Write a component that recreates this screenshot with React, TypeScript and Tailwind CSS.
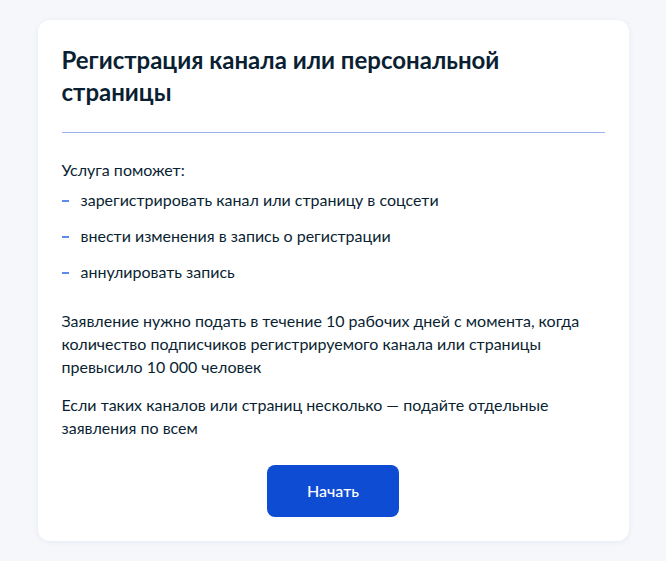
import * as React from 'react'

const ITEMS = [
    'зарегистрировать канал или страницу в соцсети',
    'внести изменения в запись о регистрации',
    'аннулировать запись',
]

export default function App() {
    return (
        <div className="min-h-[561px] bg-[#f5f7fb] pt-5 pb-5 text-[#0b1f33] font-['Lato','Noto_Sans',sans-serif]">
            <div className="mx-auto w-[591px] rounded-xl bg-white p-6 shadow-[0_1px_6px_rgba(0,40,120,0.06)]">
                {/* Title */}
                <h1 className="text-[24px] leading-8 font-bold">
                    Регистрация канала или персональной страницы
                </h1>
                <div className="mt-6 h-px bg-[#9bb4ee]" />

                {/* Info */}
                <p className="mt-[25px] text-[16px] leading-6">Услуга поможет:</p>
                <ul className="mt-[6px] flex flex-col gap-3">
                    {ITEMS.map((item) => (
                        <li key={item} className="flex items-center text-[16px] leading-6">
                            <span className="mr-3 h-[2px] w-[7px] shrink-0 translate-y-px bg-[#5a8cf0]" />
                            <span>{item}</span>
                        </li>
                    ))}
                </ul>

                <p className="mt-[25px] text-[16px] leading-[23px]">
                    Заявление нужно подать в течение 10 рабочих дней с момента, когда количество
                    подписчиков регистрируемого канала или страницы превысило 10 000 человек
                </p>
                <p className="mt-[15px] text-[16px] leading-[23px]">
                    Если таких каналов или страниц несколько — подайте отдельные заявления по всем
                </p>

                {/* Action */}
                <div className="mt-[26px] flex justify-center">
                    <button className="h-[52px] w-[132px] rounded-lg bg-[#0d4cd3] text-[16px] font-medium text-white">
                        Начать
                    </button>
                </div>
            </div>
        </div>
    )
}
